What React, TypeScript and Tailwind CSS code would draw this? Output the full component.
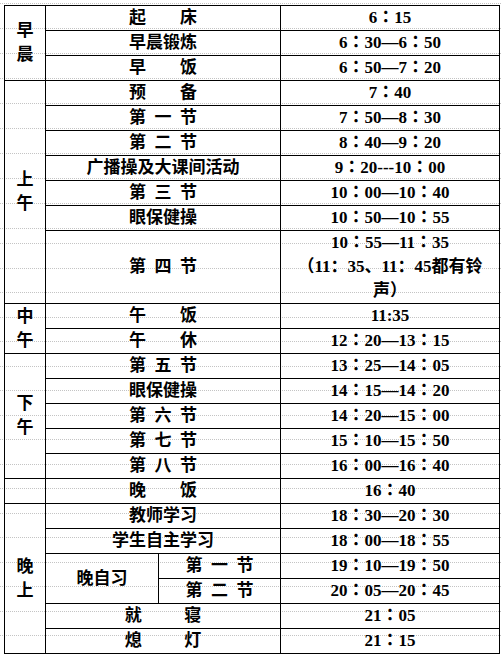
import type { ReactNode } from "react";

// 作息时间表
// 底纹虚线：上半部分每 25px 一条，第四节以后每 24.5px 一条
const gridLines: number[] = [];
for (let y = 3; y < 230; y += 25) gridLines.push(y);
for (let y = 243; y < 656; y += 24.5) gridLines.push(y);

const maskStops = gridLines
  .map((y) => `#fff ${y}px, transparent ${y}px, transparent ${y + 1}px, #fff ${y + 1}px`)
  .join(", ");

const pageBackground = {
  backgroundColor: "#fff",
  backgroundImage: `linear-gradient(to bottom, #fff 0px, ${maskStops}, #fff 100%), repeating-linear-gradient(to right, #c4c4c4 0px, #c4c4c4 1px, transparent 1px, transparent 2px)`,
};

const Cell = ({ children, className = "" }: { children?: ReactNode; className?: string }) => (
  <div className={`flex items-center justify-center whitespace-pre border-r border-b border-black text-center ${className}`}>
    {children}
  </div>
);

// 左侧时段标签：竖排两个字
const Label = ({ text, rows }: { text: string; rows: string }) => (
  <div className={`flex flex-col items-center justify-center border-r border-b border-black leading-[24px] ${rows}`}>
    {text.split("").map((c, i) => (
      <span key={i}>{c}</span>
    ))}
  </div>
);

// 时间单元格：冒号用居中的繁体字形
const Time = ({ children }: { children: ReactNode }) => (
  <Cell className="font-['Liberation_Serif','Noto_Sans_CJK_TC',serif]">{children}</Cell>
);

export default function App() {
  return (
    <div
      style={pageBackground}
      className="min-h-[656px] w-[502px] pl-[4px] pt-[5px] font-['Liberation_Serif','Noto_Sans_CJK_SC',serif] text-[17px] font-bold text-black"
    >
      <div className="grid w-[496px] grid-cols-[41px_113px_122px_219px] grid-rows-[repeat(9,25px)_73px_repeat(14,25px)] border-t border-l border-black">
        {/* 早晨 */}
        <Label text="早晨" rows="row-span-3" />
        <Cell className="col-span-2">起　　床</Cell>
        <Time>6：15</Time>
        <Cell className="col-span-2">早晨锻炼</Cell>
        <Time>6：30—6：50</Time>
        <Cell className="col-span-2">早　　饭</Cell>
        <Time>6：50—7：20</Time>

        {/* 上午 */}
        <Label text="上午" rows="row-span-7" />
        <Cell className="col-span-2">预　　备</Cell>
        <Time>7：40</Time>
        <Cell className="col-span-2">第  一  节</Cell>
        <Time>7：50—8：30</Time>
        <Cell className="col-span-2">第  二  节</Cell>
        <Time>8：40—9：20</Time>
        <Cell className="col-span-2">广播操及大课间活动</Cell>
        <Time>9：20---10：00</Time>
        <Cell className="col-span-2">第  三  节</Cell>
        <Time>10：00—10：40</Time>
        <Cell className="col-span-2">眼保健操</Cell>
        <Time>10：50—10：55</Time>
        <Cell className="col-span-2">第  四  节</Cell>
        <div className="flex flex-col items-center justify-center border-r border-b border-black leading-[24px]">
          <span className="font-['Liberation_Serif','Noto_Sans_CJK_TC',serif]">10：55—11：35</span>
          <span>（11：35、11：45都有铃</span>
          <span>声）</span>
        </div>

        {/* 中午 */}
        <Label text="中午" rows="row-span-2" />
        <Cell className="col-span-2">午　　饭</Cell>
        <Time>11:35</Time>
        <Cell className="col-span-2">午　　休</Cell>
        <Time>12：20—13：15</Time>

        {/* 下午 */}
        <Label text="下午" rows="row-span-5" />
        <Cell className="col-span-2">第  五  节</Cell>
        <Time>13：25—14：05</Time>
        <Cell className="col-span-2">眼保健操</Cell>
        <Time>14：15—14：20</Time>
        <Cell className="col-span-2">第  六  节</Cell>
        <Time>14：20—15：00</Time>
        <Cell className="col-span-2">第  七  节</Cell>
        <Time>15：10—15：50</Time>
        <Cell className="col-span-2">第  八  节</Cell>
        <Time>16：00—16：40</Time>

        <Cell />
        <Cell className="col-span-2">晚　　饭</Cell>
        <Time>16：40</Time>

        {/* 晚上 */}
        <Label text="晚上" rows="row-span-6" />
        <Cell className="col-span-2">教师学习</Cell>
        <Time>18：30—20：30</Time>
        <Cell className="col-span-2">学生自主学习</Cell>
        <Time>18：00—18：55</Time>
        <Cell className="row-span-2">晚自习</Cell>
        <Cell>第  一  节</Cell>
        <Time>19：10—19：50</Time>
        <Cell>第  二  节</Cell>
        <Time>20：05—20：45</Time>
        <Cell className="col-span-2">就　　  寝</Cell>
        <Time>21：05</Time>
        <Cell className="col-span-2">熄　　  灯</Cell>
        <Time>21：15</Time>
      </div>
    </div>
  );
}
